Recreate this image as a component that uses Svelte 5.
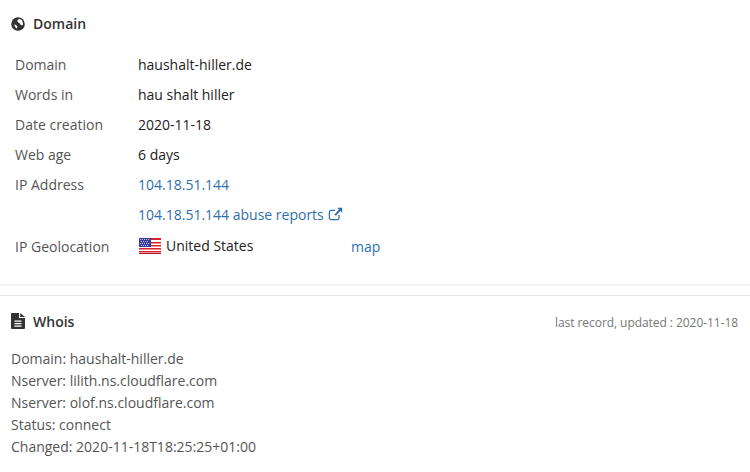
<script lang="ts">
  const rows = [
    { label: 'Domain', value: 'haushalt-hiller.de' },
    { label: 'Words in', value: 'hau shalt hiller' },
    { label: 'Date creation', value: '2020-11-18' },
    { label: 'Web age', value: '6 days' }
  ];
  const whois = [
    'Domain: haushalt-hiller.de',
    'Nserver: lilith.ns.cloudflare.com',
    'Nserver: olof.ns.cloudflare.com',
    'Status: connect',
    'Changed: 2020-11-18T18:25:25+01:00'
  ];
</script>

<div class="page">
  <section class="domain">
    <h2 class="title">
      <svg class="icon" viewBox="0 0 14 14" width="14" height="14">
        <circle cx="7" cy="7" r="6.800" fill="#333" />
        <path d="M7 2.600 8.800 1.900 10.800 3 11.800 5.200 12 7.400 10.800 8.400 9.400 7.600 8.600 6.200 7.200 5.600 6.200 4.200Z" fill="#fff" />
        <path d="M3.400 7.200 5 8 6.400 9.400 6 11.400 4.800 10.800 3.600 9Z" fill="#fff" />
      </svg>
      Domain
    </h2>
    <div class="table">
      {#each rows as r}
        <div class="label">{r.label}</div>
        <div class="value">{r.value}</div>
      {/each}
      <div class="label">IP Address</div>
      <div class="value"><a href="#ip">104.18.51.144</a></div>
      <div class="label"></div>
      <div class="value">
        <a href="#abuse">104.18.51.144 abuse reports
          <svg class="ext" viewBox="0 0 15 14" width="15" height="14">
            <path d="M11 8v3a1.6 1.6 0 0 1-1.6 1.6H3A1.6 1.6 0 0 1 1.400 11V5A1.6 1.6 0 0 1 3 3.400h4" fill="none" stroke="#2f6fab" stroke-width="1.300" />
            <path d="M9.200.8h5v5l-1.800-1.800-4.600 4.800-1.400-1.400 4.600-4.800Z" fill="#2f6fab" />
          </svg>
        </a>
      </div>
      <div class="label low">IP Geolocation</div>
      <div class="value geo low">
        <span class="country">
          <svg class="flag" viewBox="0 0 22 16" width="22" height="16">
            <rect width="22" height="16" fill="#fff" />
            <rect y="0" width="22" height="2" fill="#d8232e" />
            <rect y="4" width="22" height="1.500" fill="#d8232e" />
            <rect y="7" width="22" height="1.500" fill="#d8232e" />
            <rect y="10" width="22" height="1.500" fill="#d8232e" />
            <rect y="13" width="22" height="1.500" fill="#d8232e" />
            <rect y="15" width="22" height="1" fill="#b01c26" />
            <rect width="12" height="9" fill="#3a3a9e" />
            <path d="M1 1h1v1H1zM3 1h1v1H3zM5 1h1v1H5zM7 1h1v1H7zM9 1h1v1H9zM2 3h1v1H2zM4 3h1v1H4zM6 3h1v1H6zM8 3h1v1H8zM1 5h1v1H1zM3 5h1v1H3zM5 5h1v1H5zM7 5h1v1H7zM9 5h1v1H9zM2 7h1v1H2zM4 7h1v1H4zM6 7h1v1H6zM8 7h1v1H8z" fill="#c9c9f0" />
          </svg>
          United States
        </span>
        <a class="map" href="#map">map</a>
      </div>
    </div>
  </section>

  <div class="band"></div>

  <section class="whois">
    <div class="head">
      <h2 class="title">
        <svg class="icon file" viewBox="0 0 14 16" width="14" height="16">
          <path d="M0 1a1 1 0 0 1 1-1h7v5h6v10a1 1 0 0 1-1 1H1a1 1 0 0 1-1-1Z" fill="#333" />
          <path d="M9.200 0 14 4H9.200Z" fill="#333" />
          <path d="M3.500 7.500h7v1.200h-7zM3.500 10h7v1.200h-7zM3.500 12.500h7v1.200h-7z" fill="#fff" />
        </svg>
        Whois
      </h2>
      <span class="updated">last record, updated : 2020-11-18</span>
    </div>
    <div class="lines">
      {#each whois as line}
        <div>{line}</div>
      {/each}
    </div>
  </section>
</div>

<style>
  :global(body) {
    margin: 0;
    background: #fff;
  }

  .page {
    font-family: "Open Sans", sans-serif;
    font-size: 14px;
    color: #333;
    height: 472px;
    overflow: hidden;
  }

  .domain {
    padding: 14px 11px 0;
    height: 270px;
  }

  .title {
    display: flex;
    align-items: center;
    gap: 8px;
    margin: 0;
    font-size: 14px;
    line-height: 20px;
    font-weight: 600;
    color: #333;
  }

  .file {
    margin-top: -2px;
  }

  .table {
    display: grid;
    grid-template-columns: 123px 1fr;
    grid-auto-rows: 30px;
    margin-top: 16px;
    padding-left: 4px;
    line-height: 30px;
  }

  .label {
    color: #555;
  }

  .low {
    padding-top: 2px;
  }

  .value {
    color: #222;
  }

  a {
    color: #2f6fab;
    text-decoration: none;
  }

  .ext {
    vertical-align: -1px;
    margin-left: 1px;
  }

  .geo {
    display: flex;
  }

  .country {
    display: flex;
    align-items: center;
    gap: 5px;
    width: 212px;
    height: 30px;
    margin: -1px 0 0 1px;
  }

  .band {
    height: 9px;
    border-top: 2px solid #f2f2f2;
    border-bottom: 1px solid #e8e8e8;
    background: #fff;
  }

  .whois {
    padding: 0 12px 0 11px;
  }

  .head {
    display: flex;
    justify-content: space-between;
    align-items: center;
    padding-top: 16px;
  }

  .updated {
    font-size: 12px;
    letter-spacing: -0.06px;
    color: #777;
  }

  .lines {
    margin-top: 16px;
    line-height: 22px;
    color: #555;
  }
</style>
